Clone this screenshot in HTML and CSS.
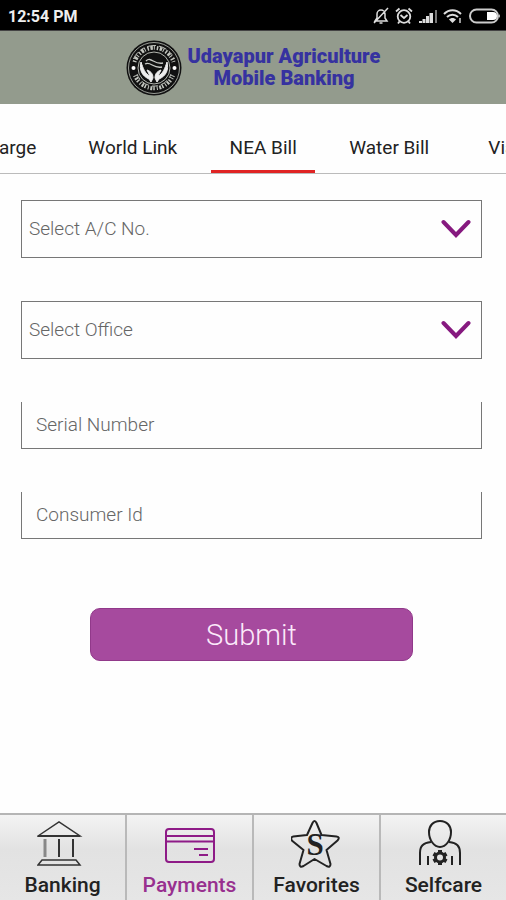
FILE: index.html
```
<!DOCTYPE html>
<html lang="en">
<head>
  <meta charset="UTF-8">
  <meta name="viewport" content="width=device-width, initial-scale=1">
  <title>Udayapur Agriculture Mobile Banking</title>
  <link rel="stylesheet" href="styles.css">
</head>
<body>
  <div class="status-bar">
    <span class="time">12:54 PM</span>
    <div class="status-icons">
      <svg width="18" height="18" viewBox="0 0 18 18" fill="none" stroke="#ddd" stroke-width="1.5">
        <path d="M3 14h12l-2-3V7a4 4 0 0 0-8 0v4zM7.500 16h3M16 1L2 16"/>
      </svg>
      <svg width="18" height="18" viewBox="0 0 18 18" fill="none" stroke="#ddd" stroke-width="1.8">
        <circle cx="9" cy="9.500" r="6.300"/>
        <path d="M1 4.500L4.500 1.500M17 4.500L13.500 1.500M5.500 8L9 11l3.500-3M4.500 14.500L3 16.500M13.500 14.500L15 16.500"/>
      </svg>
      <svg width="20" height="18" viewBox="0 0 20 18">
        <path d="M1 14h3v2H1zM4.500 12h3v4h-3zM8 9h3v7H8zM11.500 6h3.500v10h-3.500z" fill="#ddd"/>
        <path d="M17 3h2v13h-2z" fill="#777"/>
      </svg>
      <svg width="20" height="18" viewBox="0 0 20 18" fill="none" stroke="#ddd" stroke-width="2">
        <path d="M1 7c5-5 12-5 17 0M4 10c3-3 8-3 11 0"/>
        <path d="M6 12.500c2-2 5-2 7 0L9.500 16z" fill="#ddd" stroke="none"/>
        <path d="M17 11v5" stroke="#999"/>
      </svg>
      <svg width="33" height="18" viewBox="0 0 33 18">
        <rect x="2" y="2.500" width="28" height="13" rx="6.500" fill="none" stroke="#ccc" stroke-width="2"/>
        <path d="M19 5h6a4 4 0 0 1 0 8h-6z" fill="#fff"/>
        <path d="M31 7q2 2 0 4z" fill="#ccc"/>
      </svg>
    </div>
  </div>

  <header class="app-header">
    <svg class="logo" width="56" height="56" viewBox="0 0 56 56">
      <circle cx="28" cy="28" r="27.500" fill="#111"/>
      <circle cx="28" cy="28" r="25.500" fill="none" stroke="#999d96" stroke-width="1"/>
      <!-- lettering band, upper and lower arcs -->
      <g fill="none" stroke="#c2c5be">
        <path d="M8.500 22A20.500 20.500 0 0 1 47.500 22" stroke-width="4" stroke-dasharray="1.500 1.500 2.500 1 1 2"/>
        <path d="M7.400 19A22.500 22.500 0 0 1 48.600 19" stroke-width="1" stroke-dasharray="8 3 5 3 9 3"/>
        <path d="M9 35.500A20.500 20.500 0 0 0 47 35.500" stroke-width="4" stroke-dasharray="1 1.500 2 1 1.500 2"/>
        <path d="M11 34A18 18 0 0 0 45 34" stroke-width="1" stroke-dasharray="6 3 8 3"/>
      </g>
      <circle cx="7.500" cy="28" r="2" fill="#fff"/>
      <circle cx="48.500" cy="28" r="2" fill="#fff"/>
      <circle cx="28" cy="28" r="16" fill="#111" stroke="#b4b7b0" stroke-width="1"/>
      <path d="M15 22c-2 8 1 14 8 17l2 3 2-4c0-5-3-7-6-8l3 6c-5-2-7-8-9-14zM41 22c2 8-1 14-8 17l-2 3-2-4c0-5 3-7 6-8l-3 6c5-2 7-8 9-14z" fill="#eee" stroke="#eee"/>
      <path d="M20 21c5-5 8 4 17 2M19 24c6-3 8 5 17 3" fill="none" stroke="#c8cac6" stroke-width="1.300"/>
    </svg>
    <h1>Udayapur Agriculture<br>Mobile Banking</h1>
  </header>

  <nav class="tabs">
    <a href="#">Recharge</a>
    <a href="#">World Link</a>
    <a href="#" class="active">NEA Bill</a>
    <a href="#">Water Bill</a>
    <a href="#">Vianet</a>
  </nav>

  <main>
    <form class="bill-form">
      <div class="select-box">
        <select aria-label="Select A/C No.">
          <option>Select A/C No.</option>
        </select>
        <svg class="chevron" width="30" height="20" viewBox="0 0 30 20">
          <path d="M2.500 3L15 16 27.500 3" fill="none" stroke="#86197f" stroke-width="4" stroke-linecap="round"/>
        </svg>
      </div>
      <div class="select-box">
        <select aria-label="Select Office">
          <option>Select Office</option>
        </select>
        <svg class="chevron" width="30" height="20" viewBox="0 0 30 20">
          <path d="M2.500 3L15 16 27.500 3" fill="none" stroke="#86197f" stroke-width="4" stroke-linecap="round"/>
        </svg>
      </div>
      <input type="text" placeholder="Serial Number" aria-label="Serial Number">
      <input type="text" placeholder="Consumer Id" aria-label="Consumer Id">
      <button type="submit">Submit</button>
    </form>
  </main>

  <nav class="bottom-nav">
    <a href="#">
      <svg width="52" height="50" viewBox="0 0 52 50" fill="none" stroke="#333" stroke-width="1.500">
        <path d="M1 17L22 3l21 14z"/>
        <path d="M1 17h42" stroke-width="2"/>
        <path d="M22 20v18M36 20v18" stroke-width="2"/>
        <path d="M8 20v18" stroke="#888" stroke-width="3"/>
        <path d="M5 41h34l4 5H1z"/>
      </svg>
      <span>Banking</span>
    </a>
    <a href="#" class="active">
      <svg width="52" height="50" viewBox="0 0 52 50" fill="none" stroke="#8e1b87" stroke-width="2">
        <rect x="2" y="10" width="48" height="33" rx="3"/>
        <path d="M2 17h48M2 22.500h48M30 30h14M35 36h9"/>
      </svg>
      <span>Payments</span>
    </a>
    <a href="#">
      <svg width="52" height="50" viewBox="0 0 52 50">
        <path d="M21.500 4q2-4 4 0l5 12 15 1.500q4 .5 1 4L35.500 31l4 14q0 4-4 2l-12-7-11 7q-4 2-4-2l4-14L.8 21.500q-1.500-3.500 1.500-4L16 16z" fill="none" stroke="#222" stroke-width="2" stroke-linejoin="round"/>
        <text x="24" y="36" class="star-letter">S</text>
      </svg>
      <span>Favorites</span>
    </a>
    <a href="#">
      <svg width="52" height="50" viewBox="0 0 52 50" fill="none" stroke="#222" stroke-width="2">
        <path d="M22 2c7 0 11 5 11 11 0 8-5 15-11 15S11 21 11 13C11 7 15 2 22 2z"/>
        <path d="M13 23C5 24 2 27 2 34v12M31 23c8 1 11 4 11 11v12M10 37v9M34 37v9"/>
        <circle cx="22" cy="38.500" r="4.500" stroke-width="3"/>
        <path d="M22 31v3M22 43v3M15.500 34.800l2.600 1.500M25.900 40.800l2.600 1.500M15.500 42.300l2.600-1.500M25.900 36.300l2.600-1.500" stroke-width="4"/>
      </svg>
      <span>Selfcare</span>
    </a>
  </nav>
</body>
</html>
```
FILE: styles.css
```
* {
  box-sizing: border-box;
}

body {
  margin: 0;
  min-height: 100vh;
  display: flex;
  flex-direction: column;
  font-family: Roboto, sans-serif;
  background: #fefefe;
  color: #222;
}

a {
  color: inherit;
  text-decoration: none;
}

.status-bar {
  display: flex;
  justify-content: space-between;
  align-items: center;
  height: 31px;
  padding: 2px 5px 0 8px;
  background: #000;
  border-bottom: 1px solid #444;
}

.time {
  color: #eee;
  font-size: 16px;
  font-weight: 700;
}

.status-icons {
  display: flex;
  gap: 5px;
}

.app-header {
  display: flex;
  justify-content: center;
  align-items: center;
  gap: 6px;
  height: 73px;
  background: #939b8d;
}

h1 {
  margin: 0;
  padding-bottom: 2px;
  font-size: 20px;
  line-height: 22px;
  font-weight: 900;
  text-align: center;
  color: #3632a0;
}

.tabs {
  display: flex;
  justify-content: center;
  gap: 16px;
  height: 70px;
  padding-top: 18px;
  overflow: hidden;
  border-bottom: 1px solid #bbb;
}

.tabs a {
  flex: none;
  min-width: 104px;
  padding: 14px 18px 0;
  font-size: 19px;
  line-height: 24px;
  text-align: center;
  border-bottom: 3px solid transparent;
}

.tabs .active {
  border-color: #e02424;
}

main {
  flex: 1;
  padding: 26px 24px 40px 21px;
}

.bill-form {
  display: flex;
  flex-direction: column;
  gap: 43px;
}

.select-box {
  position: relative;
}

select,
input {
  display: block;
  width: 100%;
  margin: 0;
  border: 1px solid #777;
  border-radius: 0;
  background: transparent;
  font-family: inherit;
  font-size: 19px;
  font-weight: 300;
  color: #666;
}

select {
  height: 58px;
  padding: 0 48px 2px 7px;
  appearance: none;
}

.chevron {
  position: absolute;
  right: 11px;
  top: 19px;
  pointer-events: none;
}

input {
  height: 47px;
  padding: 0 14px 2px;
  border-top: none;
}

input::placeholder {
  color: #666;
}

button {
  align-self: center;
  width: 70%;
  height: 53px;
  margin-top: 26px;
  border: 1px solid #91398a;
  border-radius: 10px;
  background: #a64a9e;
  color: #fbe9fa;
  font-family: inherit;
  font-size: 29px;
  font-weight: 300;
}

.bottom-nav {
  display: flex;
  height: 87px;
  border-top: 2px solid #b5b5b5;
  background: linear-gradient(#f3f3f3, #e2e2e2 40%, #e6e6e6);
}

.bottom-nav a {
  flex: 1;
  display: flex;
  flex-direction: column;
  align-items: center;
  padding-top: 4px;
  font-size: 21px;
  line-height: 24px;
  font-weight: 500;
}

.bottom-nav a + a {
  border-left: 2px solid #b9b9b9;
}

.bottom-nav span {
  margin-top: 4px;
}

.bottom-nav .active {
  color: #98308f;
}

.star-letter {
  font-family: "Liberation Serif", serif;
  font-size: 31px;
  font-weight: 700;
  text-anchor: middle;
  fill: #222;
}
```
